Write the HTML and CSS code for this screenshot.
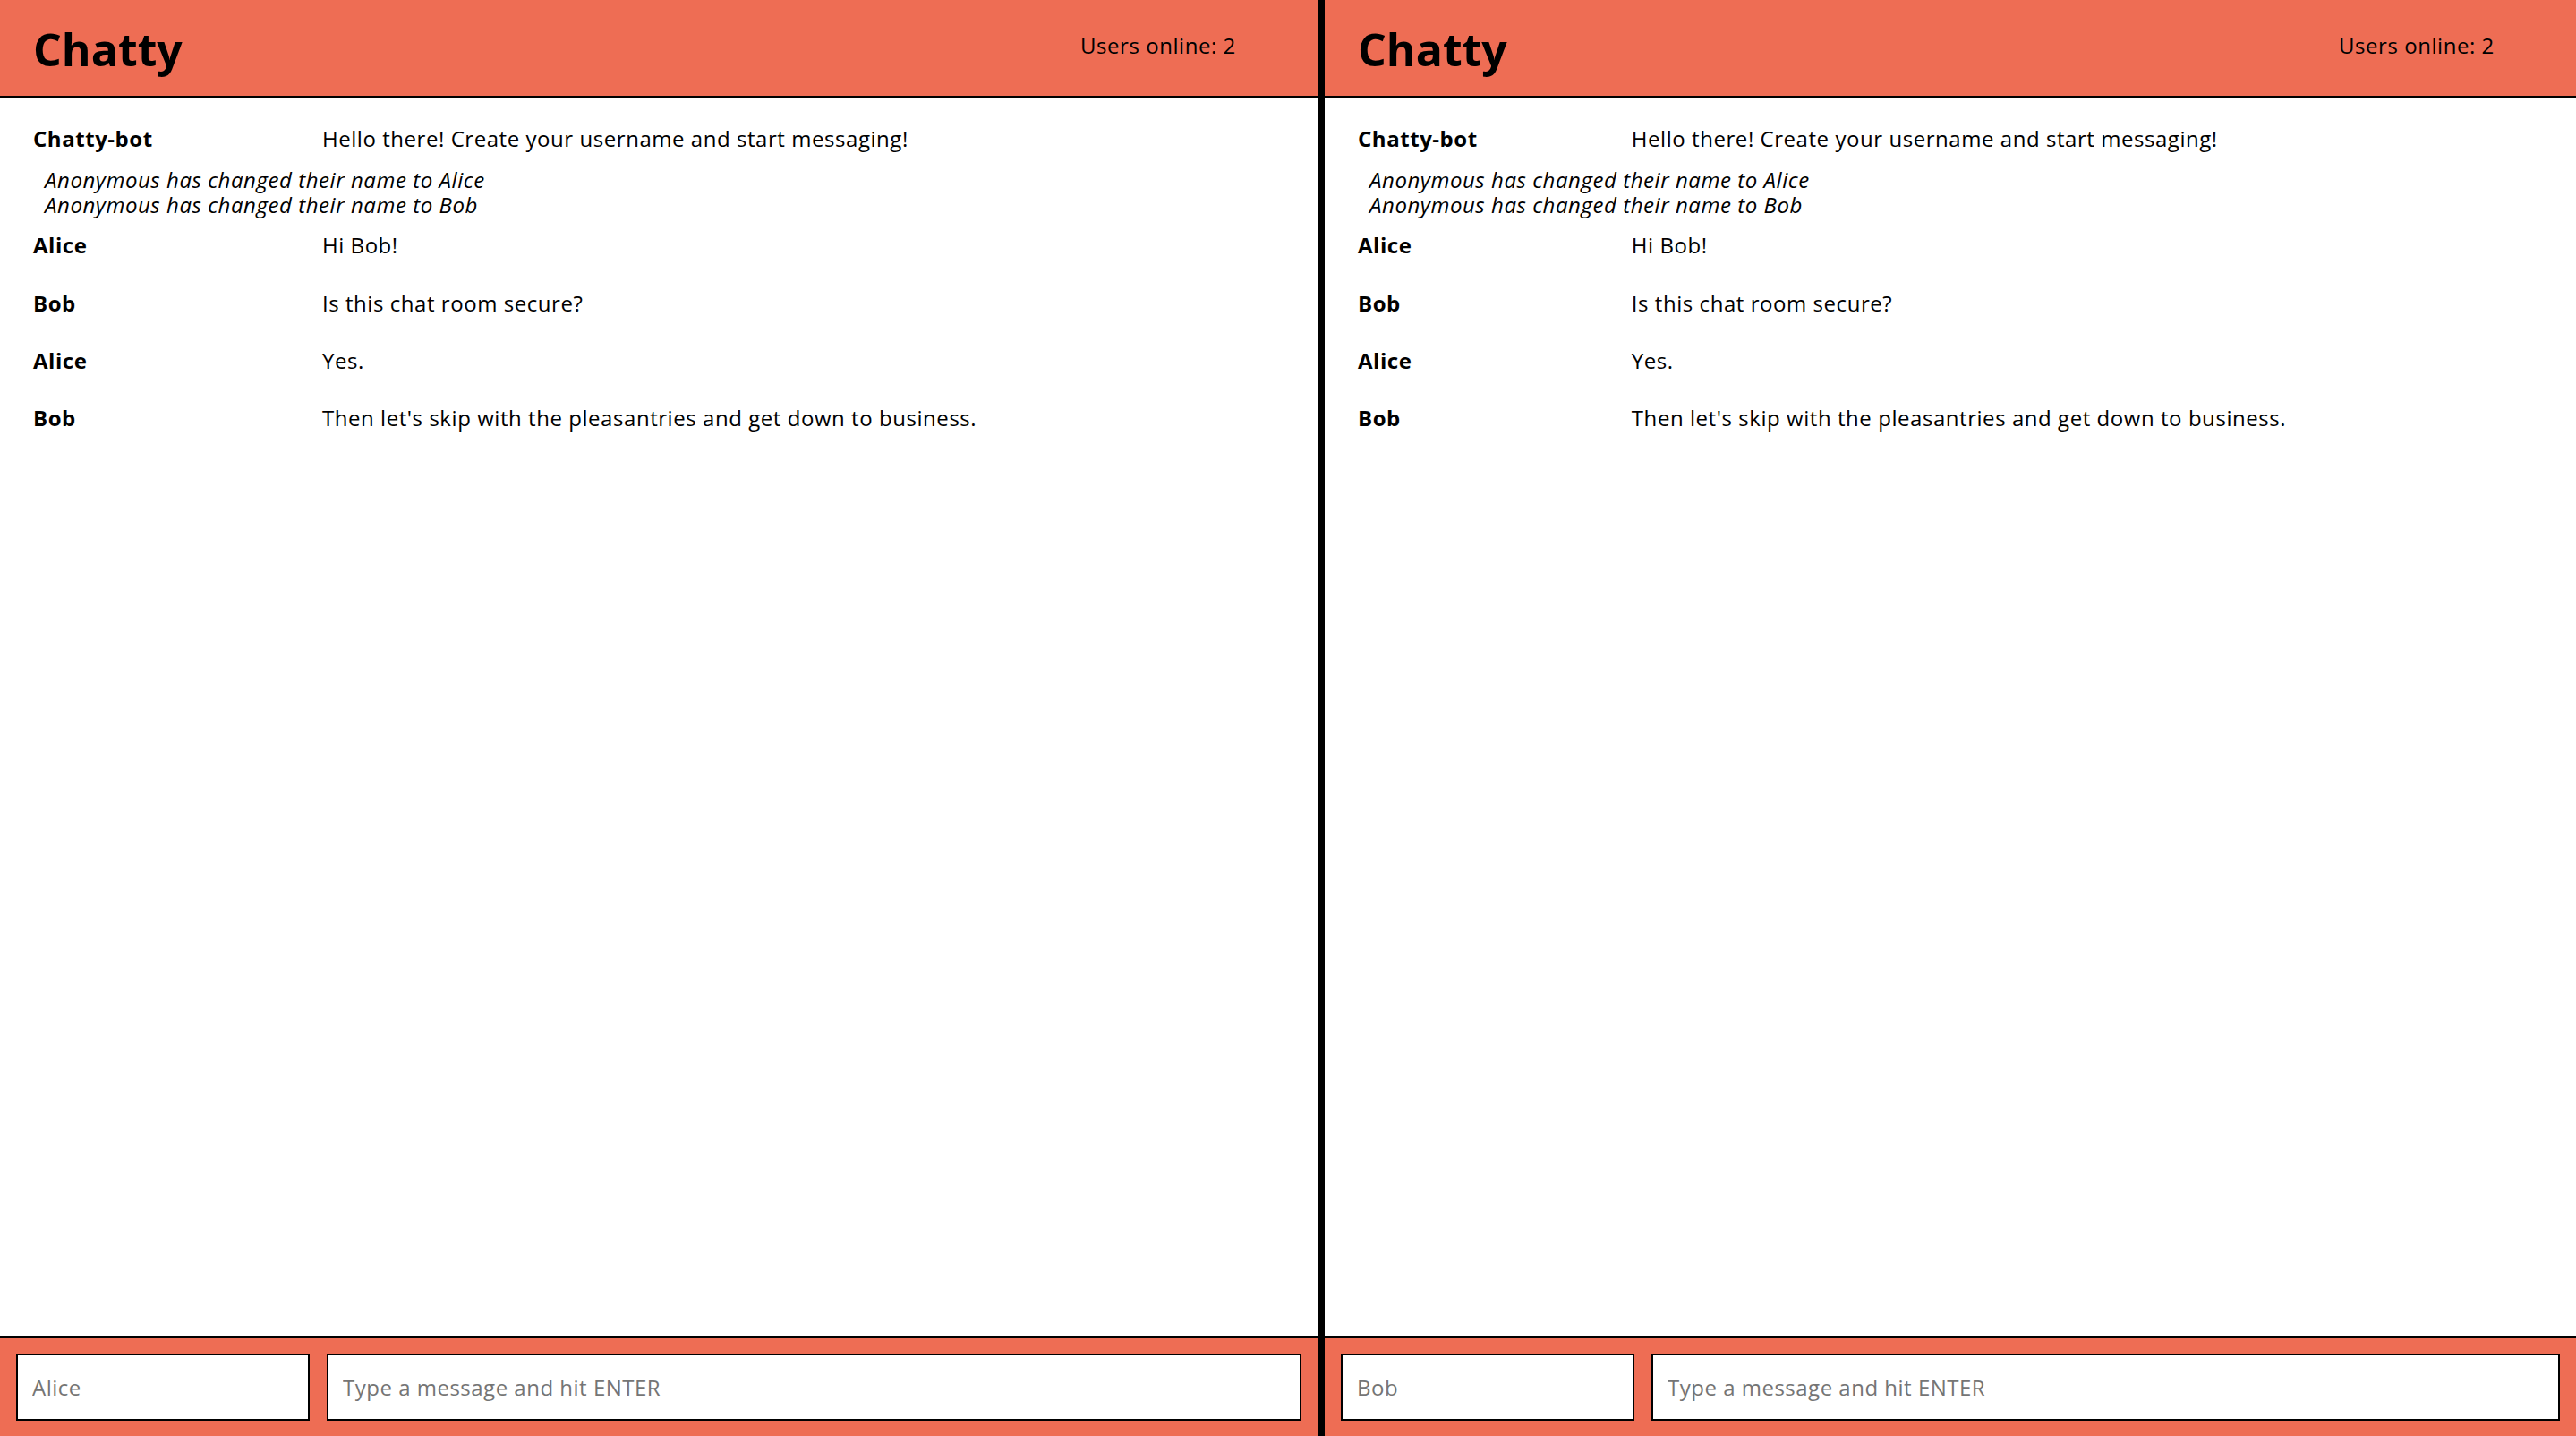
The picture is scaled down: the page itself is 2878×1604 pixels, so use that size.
FILE: index.html
```html
<!DOCTYPE html>
<html lang="en">
<head>
<meta charset="utf-8">
<title>Chatty</title>
<link rel="stylesheet" href="styles.css">
</head>
<body>
<div class="app">
  <section class="panel panel-left">
    <nav class="navbar">
      <span class="navbar-brand">Chatty</span>
      <span class="counter">Users online: 2</span>
    </nav>
    <main class="messages">
      <div class="message"><span class="message-username">Chatty-bot</span><span class="message-content">Hello there! Create your username and start messaging!</span></div>
      <div class="notification">Anonymous has changed their name to Alice</div>
      <div class="notification">Anonymous has changed their name to Bob</div>
      <div class="message"><span class="message-username">Alice</span><span class="message-content">Hi Bob!</span></div>
      <div class="message"><span class="message-username">Bob</span><span class="message-content">Is this chat room secure?</span></div>
      <div class="message"><span class="message-username">Alice</span><span class="message-content">Yes.</span></div>
      <div class="message"><span class="message-username">Bob</span><span class="message-content">Then let's skip with the pleasantries and get down to business.</span></div>
    </main>
    <footer class="chatbar">
      <input class="chatbar-username" placeholder="Alice">
      <input class="chatbar-message" placeholder="Type a message and hit ENTER">
    </footer>
  </section>
  <div class="divider"></div>
  <section class="panel panel-right">
    <nav class="navbar">
      <span class="navbar-brand">Chatty</span>
      <span class="counter">Users online: 2</span>
    </nav>
    <main class="messages">
      <div class="message"><span class="message-username">Chatty-bot</span><span class="message-content">Hello there! Create your username and start messaging!</span></div>
      <div class="notification">Anonymous has changed their name to Alice</div>
      <div class="notification">Anonymous has changed their name to Bob</div>
      <div class="message"><span class="message-username">Alice</span><span class="message-content">Hi Bob!</span></div>
      <div class="message"><span class="message-username">Bob</span><span class="message-content">Is this chat room secure?</span></div>
      <div class="message"><span class="message-username">Alice</span><span class="message-content">Yes.</span></div>
      <div class="message"><span class="message-username">Bob</span><span class="message-content">Then let's skip with the pleasantries and get down to business.</span></div>
    </main>
    <footer class="chatbar">
      <input class="chatbar-username" placeholder="Bob">
      <input class="chatbar-message" placeholder="Type a message and hit ENTER">
    </footer>
  </section>
</div>
</body>
</html>
```

FILE: styles.css
```css
* {
  box-sizing: border-box;
}

html, body {
  margin: 0;
  padding: 0;
  height: 100%;
  background: #ffffff;
}

body {
  font-family: "Open Sans", "Noto Sans", "DejaVu Sans", sans-serif;
  font-size: 24px;
  letter-spacing: 0.55px;
  color: #000;
  overflow: hidden;
}

.app {
  display: flex;
  height: 100vh;
}

.panel {
  display: flex;
  flex-direction: column;
  height: 100%;
  min-width: 0;
}

.panel-left {
  width: 1472px;
  flex: none;
}

.panel-right {
  flex: 1;
}

.divider {
  width: 8px;
  flex: none;
  background: #000;
}

.navbar {
  flex: none;
  height: 110px;
  background: #ee6d54;
  border-bottom: 3px solid #000;
  display: flex;
  justify-content: space-between;
  align-items: flex-start;
  padding-left: 37px;
}

.navbar-brand {
  font-size: 50px;
  font-weight: 700;
  letter-spacing: 0;
  line-height: 68px;
  margin-top: 21px;
}

.counter {
  width: 265px;
  font-size: 24px;
  line-height: 33px;
  margin-top: 34px;
}

.messages {
  flex: 1;
  padding: 13px 37px 0 37px;
  overflow: hidden;
}

.message {
  display: flex;
  padding: 16px 0;
  line-height: 32.3px;
}

.message-username {
  flex: none;
  width: 23.1%;
  font-weight: 700;
}

.message-content {
  flex: 1;
}

.notification {
  font-style: italic;
  line-height: 27.5px;
  padding-left: 13px;
}

.chatbar {
  flex: none;
  height: 112px;
  background: #ee6d54;
  border-top: 3px solid #000;
  display: flex;
  gap: 19px;
  padding: 17px 18px 17px 18px;
}

.chatbar input {
  height: 75px;
  border: 2px solid #000;
  background: #fff;
  padding: 0 16px;
  font-family: "Open Sans", "Noto Sans", "DejaVu Sans", sans-serif;
  font-size: 24px;
  letter-spacing: 0.5px;
  color: #000;
  outline: none;
  margin: 0;
}

.chatbar input::placeholder {
  color: #757575;
}

.chatbar-username {
  width: 328px;
  flex: none;
}

.chatbar-message {
  flex: 1;
  min-width: 0;
}
```
